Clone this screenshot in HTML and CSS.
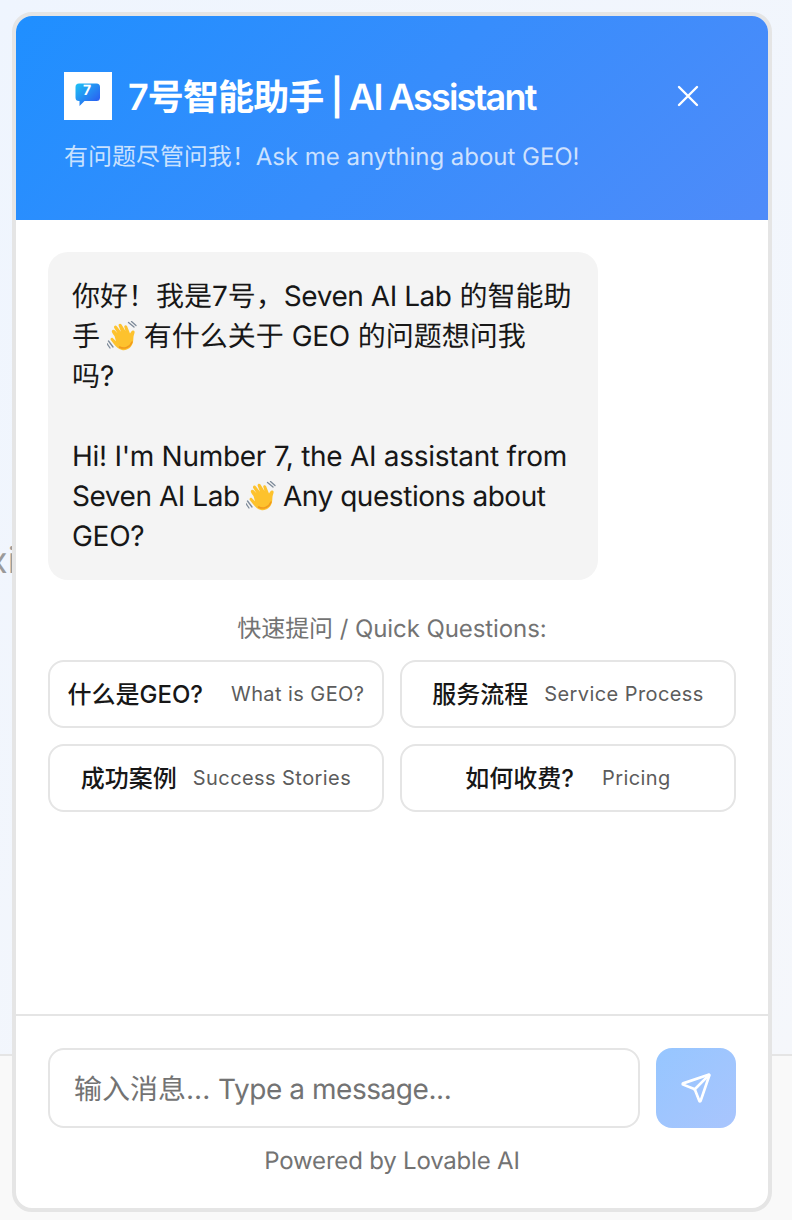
FILE: index.html
```html
<!DOCTYPE html>
<html lang="zh">
<head>
<meta charset="utf-8">
<title>7号智能助手</title>
<link rel="stylesheet" href="styles.css">
</head>
<body>
<div class="backdrop"><span class="backdrop-text">xi</span></div>
<main class="panel">
  <header class="head">
    <div class="head-row">
      <div class="brand">
        <div class="logo">
          <svg width="26" height="26" viewBox="0 0 26 26">
            <defs><linearGradient id="lg" x1="0" y1="0" x2="1" y2="1"><stop offset="0" stop-color="#1fc3f5"/><stop offset="1" stop-color="#2b4ff0"/></linearGradient></defs>
            <path d="M4 0.500H21.500A3.500 3.500 0 0 1 25 4V14.500A3.500 3.500 0 0 1 21.500 18H9.500L4.500 23V18H4A3.500 3.500 0 0 1 0.500 14.500V4A3.500 3.500 0 0 1 4 0.500Z" fill="url(#lg)"/>
          </svg>
          <span class="logo-num">7</span>
        </div>
        <h1 class="title">7号智能助手<span class="title-en"> | AI Assistant</span></h1>
      </div>
      <svg class="close" width="24" height="24" viewBox="0 0 24 24" fill="none" stroke="#fff" stroke-width="2.400" stroke-linecap="round"><path d="M3 3L21 21M21 3L3 21"/></svg>
    </div>
    <p class="sub">有问题尽管问我！Ask me anything about GEO!</p>
  </header>
  <section class="chat">
    <div class="bubble">
      <p>你好！我是7号，<span class="en-tight">Seven AI Lab</span> 的智能助手 <svg class="wave" viewBox="0 0 30 30"><use href="#hand"/></svg> 有什么关于 <span class="en">GEO</span> 的问题想问我<br>吗?</p>
      <p class="en">Hi! I'm Number 7, the AI assistant from <span class="en-tight">Seven AI Lab</span> <svg class="wave" viewBox="0 0 30 30"><use href="#hand"/></svg> <span class="en-tight">Any questions about</span> GEO?</p>
    </div>
    <p class="quick-label">快速提问 / Quick Questions:</p>
    <div class="quick-grid">
      <button class="quick"><b class="wide">什么是GEO?</b><span>What is GEO?</span></button>
      <button class="quick"><b>服务流程</b><span>Service Process</span></button>
      <button class="quick"><b>成功案例</b><span>Success Stories</span></button>
      <button class="quick"><b class="wide">如何收费?</b><span>Pricing</span></button>
    </div>
  </section>
  <footer class="foot">
    <div class="input-row">
      <div class="input"><span>输入消息... <span class="input-en">Type a message...</span></span></div>
      <button class="send">
        <svg width="32" height="32" viewBox="0 0 24 24" fill="none" stroke="#fff" stroke-width="2" stroke-linecap="round" stroke-linejoin="round"><path d="M14.536 21.686a.5.5 0 0 0 .937-.024l6.5-19a.496.496 0 0 0-.635-.635l-19 6.500a.5.5 0 0 0-.024.937l7.930 3.180a2 2 0 0 1 1.112 1.110z"/><path d="M21.854 2.147l-10.940 10.939"/></svg>
      </button>
    </div>
    <p class="powered">Powered by Lovable AI</p>
  </footer>
</main>
<svg class="defs" width="0" height="0">
  <symbol id="hand" viewBox="0 0 30 30">
    <path d="M1.500 20L6 26M0 22.500L3 27" stroke="#7d8a99" stroke-width="1.300" stroke-linecap="round" fill="none"/>
    <path d="M21.500 1.500L27 6M24.500 0.500L29 4.500" stroke="#7d8a99" stroke-width="1.300" stroke-linecap="round" fill="none"/>
    <path d="M7.500 15C6 13 5 12 4.800 10.500C4.700 8.800 6.800 8.300 8 9.500L10.500 12.300L7.200 7C6.300 5.200 8.500 3.700 9.800 5.300L14 10.800L11.700 5C11 3 13.300 2 14.500 3.500L18.500 10L17.300 6C16.900 4.200 19 3.500 20 5L23 12.500C24 10.500 25 9 26.500 9.500C28 10 27.800 11.500 27.200 13C26 16 26.700 18 26 21C25 26.500 20 30 15 29C11 28.200 9 25.500 6.500 22.500L3.800 19C2.800 17.500 4.800 16 6 17.200L9 20.200Z" fill="#fdc22d"/>
    <path d="M12.500 26C17 28.500 23 26.500 25 21" stroke="#f19a1c" stroke-width="1.500" fill="none" stroke-linecap="round"/>
  </symbol>
</svg>
</body>
</html>
```

FILE: styles.css
```css
* { box-sizing: border-box; }
html, body { margin: 0; height: 100%; }
body {
  position: relative;
  height: 1220px;
  overflow: hidden;
  padding: 12px 20px 8px 12px;
  background: #f9f9f9;
  font-family: Inter, "Noto Sans CJK SC", sans-serif;
  color: #171717;
  text-rendering: geometricPrecision;
}
.backdrop {
  position: absolute;
  left: 0;
  top: 0;
  width: 792px;
  height: 1056px;
  background: linear-gradient(135deg, #eff5fe 0%, #f5f7fb 100%);
  border-bottom: 2px solid #e5e5e5;
}
.backdrop-text {
  position: absolute;
  left: -12px;
  top: 536px;
  font-size: 36px;
  line-height: 48px;
  color: #9a9a9a;
}
.panel {
  position: relative;
  width: 760px;
  height: 1200px;
  display: flex;
  flex-direction: column;
  background: #fff;
  border: 4px solid #e5e5e5;
  border-radius: 20px;
  overflow: hidden;
}
.head {
  height: 204px;
  flex: none;
  padding: 56px 48px 0;
  background: linear-gradient(135deg, #1f8fff 0%, #4f8bf9 100%);
  color: #fff;
}
.head-row { display: flex; align-items: center; justify-content: space-between; padding-right: 20px; }
.brand { display: flex; align-items: center; gap: 16px; }
.logo {
  position: relative;
  width: 48px;
  height: 48px;
  background: #fff;
  display: flex;
  align-items: center;
  justify-content: center;
}
.logo-num {
  position: absolute;
  left: 19px;
  top: 11px;
  font-size: 14px;
  line-height: 16px;
  font-weight: 700;
  color: #fff;
}
.title {
  margin: 0;
  font-size: 36px;
  line-height: 48px;
  font-weight: 600;
  letter-spacing: -0.9px;
  position: relative;
  top: 1px;
}
.title-en { letter-spacing: -1.8px; }
.close { display: block; }
.sub {
  margin: 21px 0 0;
  font-size: 24px;
  line-height: 32px;
  letter-spacing: -0.03px;
  color: rgba(255,255,255,.75);
}
.chat { flex: 1; padding: 32px 32px 0; }
.bubble {
  width: 550px;
  padding: 24px;
  background: #f4f4f4;
  border-radius: 20px;
  font-size: 28px;
  line-height: 40px;
}
.bubble p { margin: 0; }
.bubble p + p { margin-top: 40px; }
.en { letter-spacing: -0.28px; }
.en-tight { letter-spacing: -0.45px; }
.wave { width: 30px; height: 30px; margin: 0 -1px; vertical-align: -5px; }
.quick-label {
  margin: 29px 0 0;
  text-align: center;
  font-size: 24px;
  line-height: 40px;
  letter-spacing: -0.08px;
  color: #737373;
}
.quick-grid {
  margin-top: 11px;
  display: grid;
  grid-template-columns: 1fr 1fr;
  gap: 16px;
}
.quick {
  height: 68px;
  display: flex;
  align-items: center;
  justify-content: center;
  gap: 16px;
  padding: 0 16px;
  background: #fff;
  border: 2px solid #e5e5e5;
  border-radius: 16px;
  font-family: inherit;
}
.quick b { padding-top: 1px; font-size: 24px; line-height: 32px; font-weight: 500; color: #171717; }
.quick b.wide { margin-right: 12px; }
.quick span { font-size: 20px; line-height: 32px; letter-spacing: 0.42px; color: #5c5c5c; }
.foot {
  flex: none;
  height: 194px;
  padding: 32px 32px 0;
  border-top: 2px solid #e5e5e5;
}
.input-row { display: flex; gap: 16px; }
.input {
  flex: 1;
  height: 80px;
  padding: 0 24px;
  display: flex;
  align-items: center;
  border: 2px solid #e5e5e5;
  border-radius: 16px;
  font-size: 28px;
  color: #737373;
}
.input-en { letter-spacing: -0.45px; }
.send {
  width: 80px;
  height: 80px;
  padding: 0;
  display: flex;
  align-items: center;
  justify-content: center;
  border: 0;
  border-radius: 16px;
  background: linear-gradient(135deg, #96c6ff, #a9c5fd);
}
.powered {
  margin: 13px 0 0;
  text-align: center;
  font-size: 24px;
  line-height: 40px;
  letter-spacing: -0.2px;
  color: #737373;
}
.defs { position: absolute; }
```
